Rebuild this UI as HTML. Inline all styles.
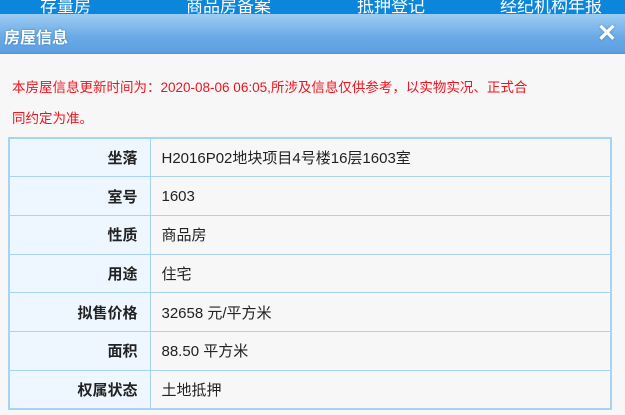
<!DOCTYPE html>
<html><head><meta charset="utf-8"><style>
*{margin:0;padding:0;box-sizing:border-box}
body{width:625px;height:415px;overflow:hidden;background:#f7f7f7;font-family:"Liberation Sans","Noto Sans CJK SC",sans-serif;position:relative}
.nav{position:absolute;left:0;top:0;width:625px;height:14px;background:#0b86da;overflow:hidden}
.nav span{position:absolute;top:-8px;color:#fff;font-size:17px}
.title{position:absolute;left:0;top:14px;width:625px;height:40px;background:linear-gradient(#9dcdf3,#6aa9e6 60%,#5c9fe0);border-bottom:1px solid #4f93d8}
.title b{position:absolute;left:4px;top:10px;color:#fff;font-size:16px;text-shadow:0 0 2px #3a78b8}
.x{position:absolute;right:8px;top:5px;color:#fff;font-size:24px;font-weight:bold;text-shadow:0 0 2px #3a78b8}
.msg{position:absolute;left:12px;top:72px;width:610px;color:#f0131e;font-size:13.5px;line-height:31px;white-space:nowrap}
table{position:absolute;left:8px;top:137px;width:604px;border-collapse:collapse;border:2px solid #a6d3f6}
td{border:1px solid #a6d3f6;height:38.7px;font-size:15px;color:#222}
td.l{width:141px;background:#eef6ff;text-align:right;padding-right:12px;font-weight:bold}
td.v{padding-left:11px;background:#f7f7f7}
</style></head><body>
<div class="nav"><span style="left:40px">存量房</span><span style="left:186px">商品房备案</span><span style="left:357px">抵押登记</span><span style="left:500px">经纪机构年报</span></div>
<div class="title"><b>房屋信息</b><span class="x">✕</span></div>
<div class="msg">本房屋信息更新时间为：2020-08-06 06:05,所涉及信息仅供参考，以实物实况、正式合<br>同约定为准。</div>
<table>
<tr><td class="l">坐落</td><td class="v">H2016P02地块项目4号楼16层1603室</td></tr>
<tr><td class="l">室号</td><td class="v">1603</td></tr>
<tr><td class="l">性质</td><td class="v">商品房</td></tr>
<tr><td class="l">用途</td><td class="v">住宅</td></tr>
<tr><td class="l">拟售价格</td><td class="v">32658 元/平方米</td></tr>
<tr><td class="l">面积</td><td class="v">88.50 平方米</td></tr>
<tr><td class="l">权属状态</td><td class="v">土地抵押</td></tr>
</table>
</body></html>
